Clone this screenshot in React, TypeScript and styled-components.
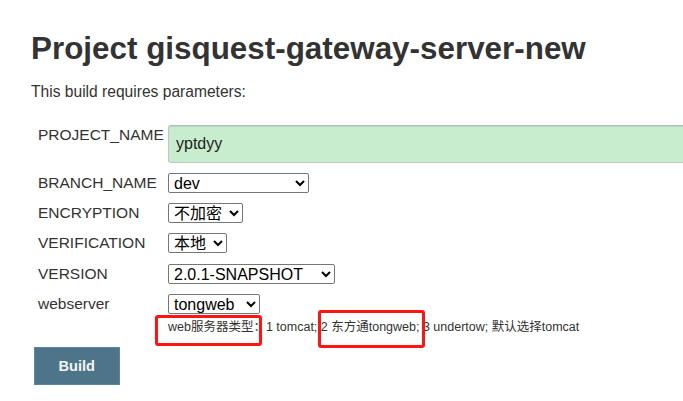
import React from "react";
import styled, { createGlobalStyle } from "styled-components";

const Global = createGlobalStyle`
  html, body {
    margin: 0;
    padding: 0;
    background: #ffffff;
    overflow: hidden;
  }
  body {
    font-family: "Liberation Sans", Arial, "Noto Sans CJK SC", sans-serif;
    color: #333333;
  }
`;

const Page = styled.div`
  position: relative;
  width: 683px;
  height: 401px;
  padding: 31px 0 0 31px;
  box-sizing: border-box;
  overflow: hidden;
`;

const Title = styled.h1`
  margin: 0;
  font-size: 31.4px;
  line-height: 36px;
  font-weight: bold;
  color: #333333;
  white-space: nowrap;
`;

const Intro = styled.p`
  margin: 16px 0 0 0;
  font-size: 15.6px;
  line-height: 18px;
  color: #333333;
`;

const ParamGrid = styled.div`
  display: grid;
  grid-template-columns: 130px 1fr;
  row-gap: 10.3px;
  margin: 24px 0 0 7px;
  align-items: start;
`;

const Label = styled.div`
  font-size: 15.5px;
  line-height: 20px;
  color: #333333;
  white-space: nowrap;
`;

const TextInput = styled.input`
  box-sizing: border-box;
  width: 540px;
  height: 37.5px;
  padding: 1px 7px 0 7px;
  margin: 0;
  font-family: "Liberation Sans", Arial, sans-serif;
  font-size: 16px;
  color: #222222;
  background: #c8ecce;
  border: 1px solid #c4c4c4;
  border-top-color: #b8b8b8;
  border-radius: 3px;
  box-shadow: inset 0 1px 1px rgba(0, 0, 0, 0.08);
  outline: none;
`;

const Select = styled.select<{ $w: number }>`
  box-sizing: border-box;
  width: ${(p) => p.$w}px;
  height: 20px;
  margin: 0;
  padding: 0 0 0 1px;
  font-family: "Liberation Sans", Arial, "Noto Sans CJK SC", sans-serif;
  font-size: 16px;
  line-height: 18px;
  color: #000000;
  background: #ffffff;
  border: 1px solid #767676;
  border-radius: 2px;
`;

const ControlStack = styled.div`
  display: flex;
  flex-direction: column;
  align-items: flex-start;
  gap: 6px;
`;

const Description = styled.div`
  font-size: 12.5px;
  line-height: 15px;
  color: #333333;
  white-space: nowrap;
`;

const BuildButton = styled.button`
  box-sizing: border-box;
  margin: 12px 0 0 3px;
  width: 85.5px;
  height: 38px;
  padding: 0;
  font-family: "Liberation Sans", Arial, sans-serif;
  font-size: 14.6px;
  font-weight: bold;
  color: #f2f4f5;
  background: #4d7488;
  border: 1px solid #5a879c;
  border-radius: 0;
`;

const Highlight = styled.div<{ $x: number; $y: number; $w: number; $h: number }>`
  position: absolute;
  left: ${(p) => p.$x}px;
  top: ${(p) => p.$y}px;
  width: ${(p) => p.$w}px;
  height: ${(p) => p.$h}px;
  box-sizing: border-box;
  border: 3px solid #ff1414;
  border-radius: 3px;
  pointer-events: none;
`;

type Param = {
  name: string;
  kind: "text" | "select";
  value: string;
  options?: string[];
  width?: number;
  description?: string;
};

const params: Param[] = [
  { name: "PROJECT_NAME", kind: "text", value: "yptdyy" },
  { name: "BRANCH_NAME", kind: "select", value: "dev", options: ["dev", "master"], width: 140.5 },
  { name: "ENCRYPTION", kind: "select", value: "不加密", options: ["不加密", "加密"], width: 74.5 },
  { name: "VERIFICATION", kind: "select", value: "本地", options: ["本地", "远程"], width: 58.5 },
  { name: "VERSION", kind: "select", value: "2.0.1-SNAPSHOT", options: ["2.0.1-SNAPSHOT"], width: 166.5 },
  {
    name: "webserver",
    kind: "select",
    value: "tongweb",
    options: ["tomcat", "tongweb", "undertow"],
    width: 91.5,
    description: "web服务器类型：1 tomcat; 2 东方通tongweb; 3 undertow; 默认选择tomcat",
  },
];

export default function App() {
  return (
    <>
      <Global />
      <Page>
        <Title>Project gisquest-gateway-server-new</Title>
        <Intro>This build requires parameters:</Intro>
        <ParamGrid>
          {params.map((p) => (
            <React.Fragment key={p.name}>
              <Label>{p.name}</Label>
              {p.kind === "text" ? (
                <TextInput defaultValue={p.value} />
              ) : (
                <ControlStack>
                  <Select $w={p.width ?? 100} defaultValue={p.value}>
                    {p.options!.map((o) => (
                      <option key={o} value={o}>
                        {o}
                      </option>
                    ))}
                  </Select>
                  {p.description && <Description>{p.description}</Description>}
                </ControlStack>
              )}
            </React.Fragment>
          ))}
        </ParamGrid>
        <BuildButton>Build</BuildButton>
        <Highlight $x={155} $y={315} $w={107} $h={31} />
        <Highlight $x={318} $y={310} $w={107} $h={38} />
      </Page>
    </>
  );
}
